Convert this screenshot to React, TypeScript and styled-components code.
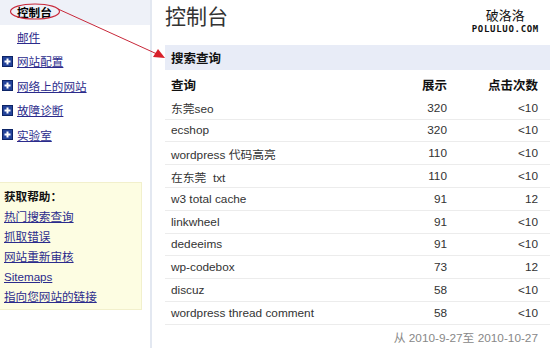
import styled, { createGlobalStyle } from 'styled-components';

const GlobalStyle = createGlobalStyle`
  html, body {
    margin: 0;
    padding: 0;
    background: #fff;
  }
  body {
    font-family: 'Liberation Sans', Arial, 'Noto Sans CJK SC', sans-serif;
    color: #333;
  }
`;

const Page = styled.div`
  position: relative;
  width: 550px;
  height: 348px;
  overflow: hidden;
  display: grid;
  grid-template-columns: 152px 1fr;
`;

const Sidebar = styled.nav`
  border-right: 2px solid #e3e8f1;
  display: flex;
  flex-direction: column;
`;

const NavItem = styled.div<{ $active?: boolean; $indent?: boolean }>`
  height: 24.5px;
  display: flex;
  align-items: center;
  gap: 4px;
  padding-left: ${({ $active, $indent }) => ($active || $indent ? '17px' : '2px')};
  background: ${({ $active }) => ($active ? '#eef1f8' : 'transparent')};
  font-size: 11.6px;
  font-weight: ${({ $active }) => ($active ? 'bold' : 'normal')};
  color: ${({ $active }) => ($active ? '#000' : '#2b2b8c')};
`;

const NavLink = styled.a`
  color: #2b2b8c;
  text-decoration: underline;
  cursor: pointer;
`;

const HelpBox = styled.div`
  margin-top: 35px;
  width: 137px;
  padding: 4px 0 2px 4px;
  background: #fdfde2;
  border: 1px solid #f2f0cc;
  border-left: none;
  font-size: 11.6px;
  line-height: 20px;
  display: flex;
  flex-direction: column;
`;

const HelpTitle = styled.div`
  font-weight: bold;
  color: #111;
`;

const Main = styled.main`
  padding-left: 13px;
  display: flex;
  flex-direction: column;
`;

const Title = styled.h1`
  margin: 0;
  height: 45px;
  font-size: 21px;
  font-weight: normal;
  line-height: 30px;
  color: #333;
  font-family: 'Noto Sans CJK SC', sans-serif;
`;

const SectionBar = styled.div`
  height: 25px;
  background: #e8ecf7;
  padding-left: 6px;
  display: flex;
  align-items: center;
  font-size: 12.5px;
  font-weight: bold;
  color: #111;
`;

const Table = styled.div`
  margin-top: 4px;
  display: flex;
  flex-direction: column;
`;

const Row = styled.div<{ $head?: boolean }>`
  height: 22.8px;
  display: grid;
  grid-template-columns: 1fr 80px 91px;
  align-items: center;
  padding: 0 12px 0 6px;
  border-bottom: 1px solid ${({ $head }) => ($head ? 'transparent' : '#ececec')};
  box-sizing: border-box;
  font-size: ${({ $head }) => ($head ? '12.5px' : '11.8px')};
  font-weight: ${({ $head }) => ($head ? 'bold' : 'normal')};
  color: ${({ $head }) => ($head ? '#111' : '#333')};
  white-space: pre;
`;

const Num = styled.span`
  text-align: right;
`;

const Footer = styled.div`
  height: 24px;
  display: flex;
  align-items: center;
  justify-content: flex-end;
  padding-right: 12px;
  font-size: 11.8px;
  color: #888;
`;

const Watermark = styled.div`
  position: absolute;
  top: 8px;
  right: 11px;
  display: flex;
  flex-direction: column;
  align-items: center;
  color: #111;
`;

const WmCn = styled.span`
  font-size: 13px;
  line-height: 14px;
  margin-bottom: 2px;
  font-family: 'Noto Sans CJK SC', sans-serif;
`;

const WmEn = styled.span`
  font-size: 9px;
  line-height: 10px;
  font-weight: bold;
  letter-spacing: 0.7px;
  font-family: 'DejaVu Sans Mono', monospace;
`;

const Overlay = styled.svg`
  position: absolute;
  left: 0;
  top: 0;
  pointer-events: none;
`;

const PlusIcon = () => (
  <svg width="11" height="11" viewBox="0 0 11 11">
    <rect x="0.5" y="0.5" width="10" height="10" fill="#23439a" stroke="#0d2466" />
    <path d="M5.5 2.5v6M2.5 5.5h6" stroke="#fff" strokeWidth="2" />
  </svg>
);

const navGroups = ['网站配置', '网络上的网站', '故障诊断', '实验室'];
const helpLinks = ['热门搜索查询', '抓取错误', '网站重新审核', 'Sitemaps', '指向您网站的链接'];

const rows: [string, string, string][] = [
  ['东莞seo', '320', '<10'],
  ['ecshop', '320', '<10'],
  ['wordpress 代码高亮', '110', '<10'],
  ['在东莞  txt', '110', '<10'],
  ['w3 total cache', '91', '12'],
  ['linkwheel', '91', '<10'],
  ['dedeeims', '91', '<10'],
  ['wp-codebox', '73', '12'],
  ['discuz', '58', '<10'],
  ['wordpress thread comment', '58', '<10'],
];

export default function App() {
  return (
    <>
      <GlobalStyle />
      <Page>
        <Sidebar>
          <NavItem $active>控制台</NavItem>
          <NavItem $indent>
            <NavLink>邮件</NavLink>
          </NavItem>
          {navGroups.map((g) => (
            <NavItem key={g}>
              <PlusIcon />
              <NavLink>{g}</NavLink>
            </NavItem>
          ))}
          <HelpBox>
            <HelpTitle>获取帮助：</HelpTitle>
            {helpLinks.map((l) => (
              <NavLink key={l}>{l}</NavLink>
            ))}
          </HelpBox>
        </Sidebar>
        <Main>
          <Title>控制台</Title>
          <SectionBar>搜索查询</SectionBar>
          <Table>
            <Row $head>
              <span>查询</span>
              <Num>展示</Num>
              <Num>点击次数</Num>
            </Row>
            {rows.map(([q, shows, clicks]) => (
              <Row key={q}>
                <span>{q}</span>
                <Num>{shows}</Num>
                <Num>{clicks}</Num>
              </Row>
            ))}
          </Table>
          <Footer>从 2010-9-27至 2010-10-27</Footer>
        </Main>
        <Watermark>
          <WmCn>破洛洛</WmCn>
          <WmEn>POLULUO.COM</WmEn>
        </Watermark>
        <Overlay width="550" height="348">
          <ellipse cx="35" cy="11.5" rx="24.5" ry="7.5" fill="none" stroke="#c8283a" strokeWidth="1.2" />
          <line x1="58" y1="9" x2="157" y2="54" stroke="#c8283a" strokeWidth="1" />
          <polygon points="165,58 153,57 158,49" fill="#d8202a" />
        </Overlay>
      </Page>
    </>
  );
}
